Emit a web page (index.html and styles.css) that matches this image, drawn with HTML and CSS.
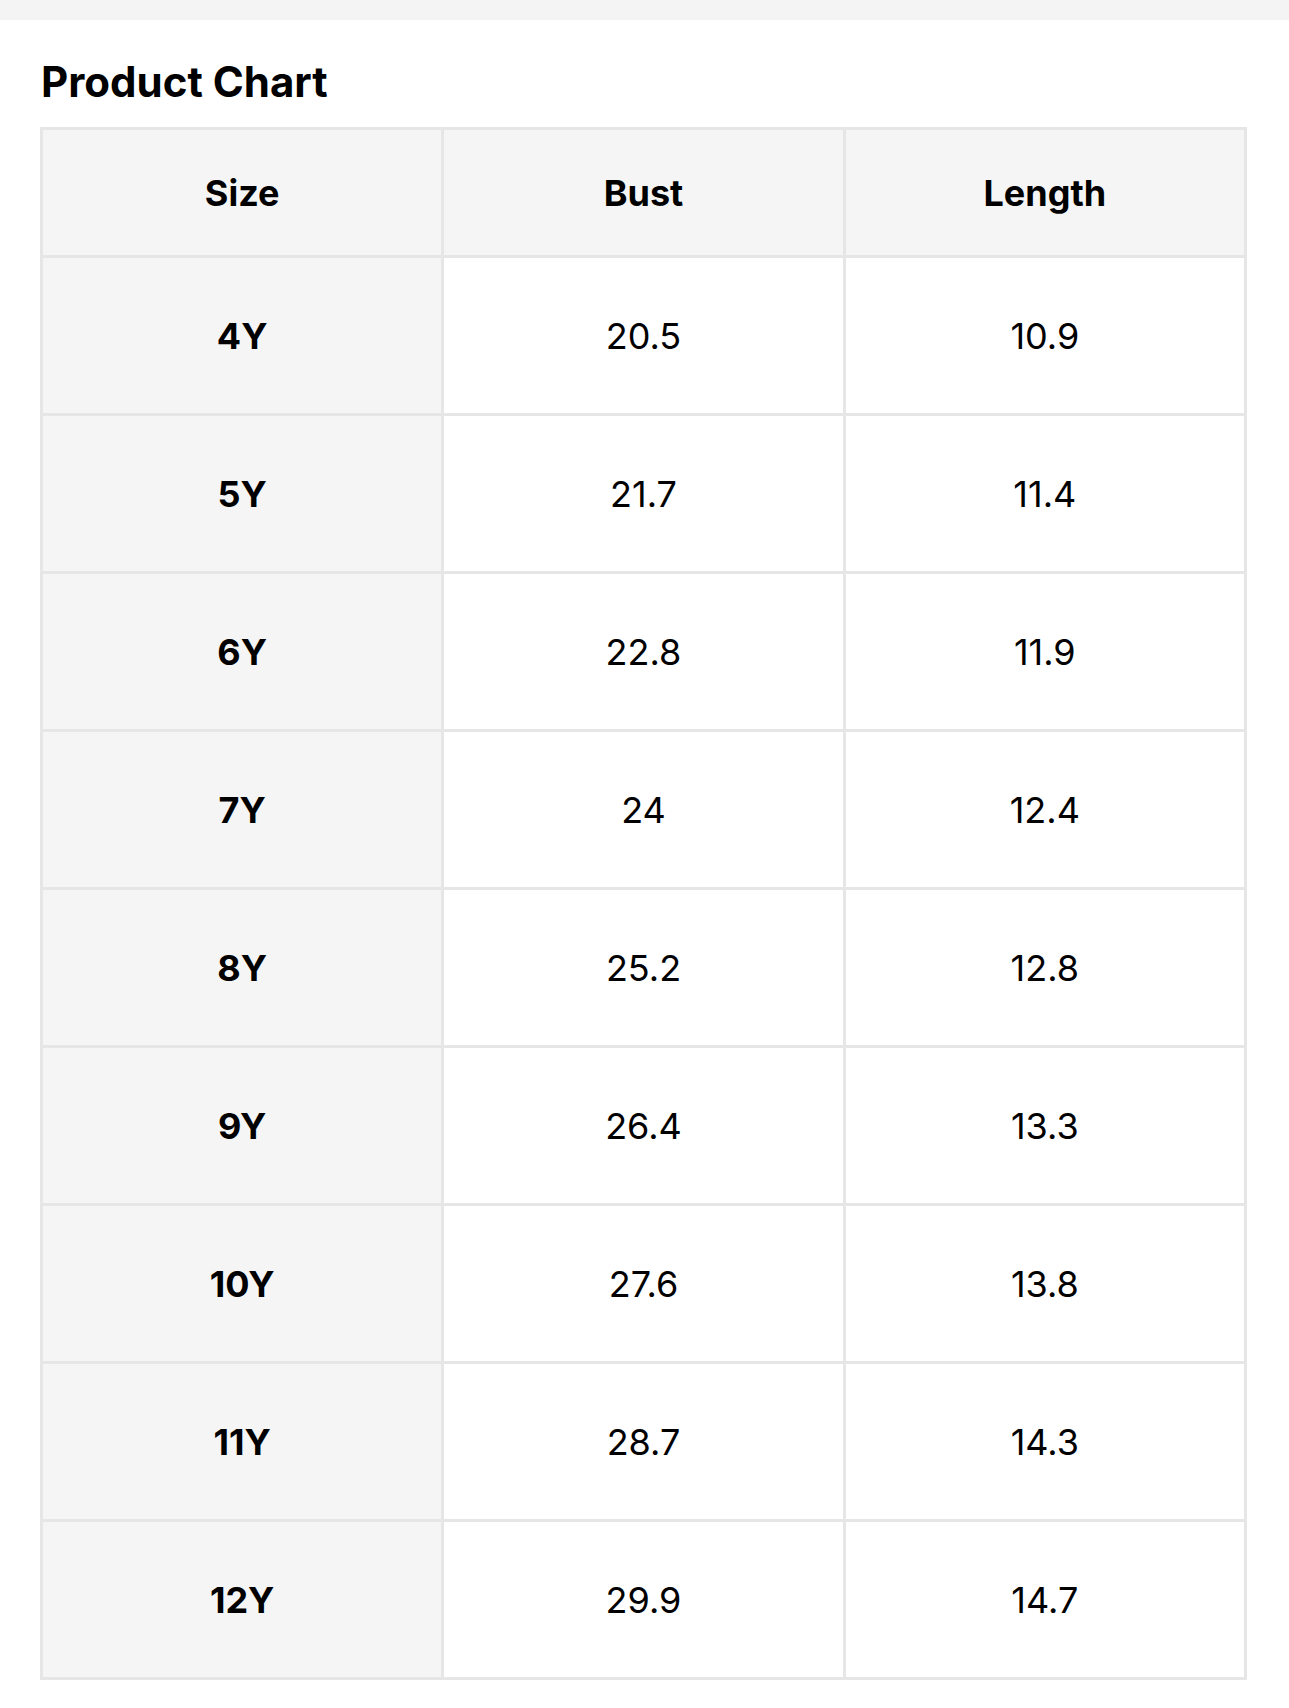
FILE: index.html
```html
<!DOCTYPE html>
<html lang="en">
<head>
<meta charset="utf-8">
<title>Product Chart</title>
<link rel="stylesheet" href="styles.css">
</head>
<body>
<div class="topbar"></div>
<section class="chart">
  <h2 class="chart-title">Product Chart</h2>
  <table class="size-table">
    <thead>
      <tr><th>Size</th><th>Bust</th><th>Length</th></tr>
    </thead>
    <tbody>
      <tr><th>4Y</th><td>20.5</td><td>10.9</td></tr>
      <tr><th>5Y</th><td>21.7</td><td>11.4</td></tr>
      <tr><th>6Y</th><td>22.8</td><td>11.9</td></tr>
      <tr><th>7Y</th><td>24</td><td>12.4</td></tr>
      <tr><th>8Y</th><td>25.2</td><td>12.8</td></tr>
      <tr><th>9Y</th><td>26.4</td><td>13.3</td></tr>
      <tr><th>10Y</th><td>27.6</td><td>13.8</td></tr>
      <tr><th>11Y</th><td>28.7</td><td>14.3</td></tr>
      <tr><th>12Y</th><td>29.9</td><td>14.7</td></tr>
    </tbody>
  </table>
</section>
</body>
</html>
```

FILE: styles.css
```css
html, body {
  margin: 0;
  padding: 0;
  background: #ffffff;
  font-family: Inter, "Noto Sans", "Liberation Sans", sans-serif;
  color: #000000;
}

.topbar {
  height: 20px;
  background: #f4f4f4;
}

.chart {
  padding: 0 42px 0 40px;
}

.chart-title {
  margin: 0;
  padding: 37px 0 20px 1px;
  font-size: 42px;
  line-height: 50px;
  font-weight: 700;
  letter-spacing: 0;
}

.size-table {
  width: 1207px;
  table-layout: fixed;
  border-collapse: collapse;
  border: 3px solid #e6e6e6;
}

.size-table th,
.size-table td {
  border: 3px solid #e6e6e6;
  text-align: center;
  vertical-align: middle;
  padding: 0;
  font-size: 36px;
}

.size-table thead th {
  height: 125px;
  background: #f5f5f5;
  font-weight: 700;
}

.size-table tbody th {
  background: #f5f5f5;
  font-weight: 700;
}

.size-table tbody td {
  background: #ffffff;
  font-weight: 400;
}

.size-table tbody th,
.size-table tbody td {
  height: 155px;
}
```
